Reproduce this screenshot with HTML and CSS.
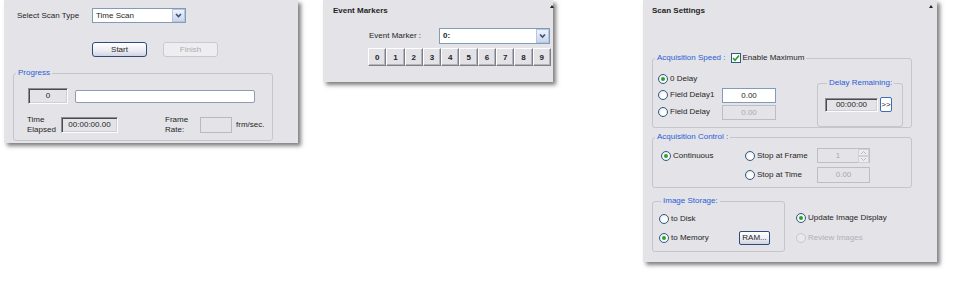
FILE: index.html
```html
<!DOCTYPE html>
<html lang="en">
<head>
    <meta charset="UTF-8">
    <title>Scan Control</title>
    <link rel="stylesheet" href="styles.css">
</head>
<body>
    <div class="desk">

        <!-- Scan type / progress -->
        <section class="panel panel-scan">
            <div class="row scan-type">
                <span class="lbl">Select Scan Type</span>
                <div class="combo scan-combo">
                    <span class="value">Time Scan</span>
                    <span class="drop"><svg width="11" height="11" viewBox="0 0 11 11"><path d="M3 4 L5.5 6.5 L8 4" fill="none" stroke="#3d4f73" stroke-width="1.6"/></svg></span>
                </div>
            </div>
            <div class="row actions">
                <button class="btn">Start</button>
                <button class="btn" disabled>Finish</button>
            </div>
            <fieldset class="group progress">
                <legend>Progress</legend>
                <div class="row r1">
                    <div class="sunken counter">0</div>
                    <div class="bar"></div>
                </div>
                <div class="row r2">
                    <span class="two-line te-label">Time<br>Elapsed</span>
                    <div class="sunken time">00:00:00.00</div>
                    <span class="two-line fr-label">Frame<br>Rate:</span>
                    <div class="rate"></div>
                    <span class="unit">frm/sec.</span>
                </div>
            </fieldset>
        </section>

        <!-- Event markers -->
        <section class="panel panel-events">
            <div class="title">Event Markers</div>
            <i class="collapse edge"></i>
            <div class="row marker-row">
                <span class="lbl">Event Marker :</span>
                <div class="combo marker-combo">
                    <span class="value strong">0:</span>
                    <span class="drop"><svg width="11" height="12" viewBox="0 0 11 12"><path d="M3 4.5 L5.5 7 L8 4.5" fill="none" stroke="#3d4f73" stroke-width="1.6"/></svg></span>
                </div>
            </div>
            <div class="digits">
                <button>0</button><button>1</button><button>2</button><button>3</button><button>4</button>
                <button>5</button><button>6</button><button>7</button><button>8</button><button>9</button>
            </div>
        </section>

        <!-- Scan settings -->
        <section class="panel panel-settings">
            <div class="title">Scan Settings</div>
            <i class="collapse"></i>

            <fieldset class="group speed">
                <legend>
                    <span class="blue">Acquisition Speed :</span>
                    <span class="check"><svg width="8" height="8" viewBox="0 0 8 8"><path d="M1 4 L3 6.2 L7 1.5" fill="none" stroke="#21a121" stroke-width="1.6"/></svg></span>
                    <span>Enable Maximum</span>
                </legend>
                <div class="speed-body">
                    <div class="speed-left">
                        <div class="opt"><span class="opt-label"><i class="radio on"></i>0 Delay</span></div>
                        <div class="opt"><span class="opt-label"><i class="radio"></i>Field Delay1</span><div class="field">0.00</div></div>
                        <div class="opt gap1"><span class="opt-label"><i class="radio"></i>Field Delay</span><div class="field off">0.00</div></div>
                    </div>
                    <fieldset class="group remain">
                        <legend>Delay Remaining:</legend>
                        <div class="row">
                            <div class="sunken clock">00:00:00</div>
                            <button class="more">&gt;&gt;</button>
                        </div>
                    </fieldset>
                </div>
            </fieldset>

            <fieldset class="group control">
                <legend>Acquisition Control :</legend>
                <div class="control-grid">
                    <div class="opt cont"><i class="radio on"></i>Continuous</div>
                    <div class="opt"><i class="radio"></i>Stop at Frame</div>
                    <div class="spin">
                        <span class="spin-val">1</span>
                        <span class="spin-btns">
                            <span><svg width="7" height="5" viewBox="0 0 7 5"><path d="M1 4 L3.5 1.5 L6 4" fill="none" stroke="#b8b8c0" stroke-width="1"/></svg></span>
                            <span><svg width="7" height="5" viewBox="0 0 7 5"><path d="M1 1 L3.5 3.5 L6 1" fill="none" stroke="#b8b8c0" stroke-width="1"/></svg></span>
                        </span>
                    </div>
                    <div></div>
                    <div class="opt"><i class="radio"></i>Stop at Time</div>
                    <div class="field off wide">0.00</div>
                </div>
            </fieldset>

            <div class="storage-row">
                <fieldset class="group storage">
                    <legend>Image Storage:</legend>
                    <div class="opt"><span class="st-label"><i class="radio"></i>to Disk</span></div>
                    <div class="opt gap3"><span class="st-label"><i class="radio on"></i>to Memory</span><button class="btn ram">RAM...</button></div>
                </fieldset>
                <div class="display-opts">
                    <div class="opt"><i class="radio on"></i>Update Image Display</div>
                    <div class="opt gap4 disabled"><i class="radio off"></i>Review Images</div>
                </div>
            </div>
        </section>

    </div>
</body>
</html>
```

FILE: styles.css
```css
* {
    box-sizing: border-box;
}
body {
    margin: 0;
    width: 953px;
    height: 281px;
    overflow: hidden;
    background: #fff;
    font: 8px/10px "Liberation Sans", Arial, sans-serif;
    color: #1f1f24;
}
.desk {
    display: flex;
    align-items: flex-start;
    padding-left: 4px;
}
.panel {
    position: relative;
    flex: none;
    background: #e3e3e8;
    box-shadow: 3px 3px 4px rgba(0, 0, 0, 0.5);
}
.panel-scan {
    width: 294px;
    height: 143px;
}
.panel-events {
    width: 230px;
    height: 82px;
    margin-left: 25px;
}
.panel-settings {
    width: 294px;
    height: 262px;
    margin-left: 90px;
}
.title {
    height: 16px;
    padding: 6px 0 0 10px;
    font-weight: bold;
}
.panel-settings .title {
    padding-left: 9px;
}
.collapse {
    position: absolute;
    top: 5px;
    right: 4px;
    width: 0;
    height: 0;
    border-left: 2.5px solid transparent;
    border-right: 2.5px solid transparent;
    border-bottom: 3px solid #222;
}
.collapse.edge {
    right: -1px;
}
.row {
    display: flex;
    align-items: center;
}

/* inputs */
.combo {
    display: flex;
    align-items: center;
    background: #fff;
    border: 1px solid #7f9db9;
}
.combo .value {
    flex: 1;
    padding-left: 3px;
}
.strong {
    font-weight: bold;
}
.drop {
    display: flex;
    align-items: center;
    justify-content: center;
    width: 13px;
    height: 100%;
    border: 1px solid #b7c5de;
    background: linear-gradient(#eef2fb, #c9d5ec);
}
.btn {
    height: 15px;
    padding: 0;
    font: inherit;
    color: #1f1f24;
    border: 1px solid #2f4a7c;
    border-radius: 3px;
    background: linear-gradient(#ffffff, #ebebf3 60%, #d3d3df);
}
.btn:disabled {
    color: #ababb2;
    border-color: #c9c9cf;
    background: #eeeef1;
}
.sunken {
    display: flex;
    align-items: center;
    justify-content: center;
    background: #e3e3e8;
    border: 1px solid;
    border-color: #8c8c92 #fdfdfd #fdfdfd #8c8c92;
    box-shadow: inset 1px 1px 0 #4a4a50, inset -1px -1px 0 #cfcfd5;
}
.field {
    width: 54px;
    height: 15px;
    line-height: 13px;
    text-align: center;
    background: #fff;
    border: 1px solid #7f9db9;
}
.field.off {
    color: #a9a9b0;
    background: #e3e3e8;
    border-color: #bdbdc5;
}

/* group boxes */
.group {
    margin: 0;
    padding: 0;
    min-width: 0;
    border: 1px solid #c5c5cc;
    border-radius: 3px;
}
.group legend {
    margin-left: 2px;
    padding: 0 2px;
    line-height: 10px;
    color: #2b5cd6;
}

/* scan panel */
.scan-type {
    margin-top: 8px;
    height: 15px;
}
.scan-type .lbl {
    width: 88px;
    padding-left: 13px;
}
.scan-combo {
    width: 94px;
    height: 15px;
}
.actions {
    margin-top: 19px;
    padding-left: 88px;
    gap: 16px;
}
.actions .btn {
    width: 55px;
}
.progress {
    width: 260px;
    margin: 11px 0 0 9px;
    padding: 10px 0 7px;
}
.progress .r1 {
    height: 16px;
}
.counter {
    width: 40px;
    height: 16px;
    margin-left: 14px;
}
.bar {
    width: 180px;
    height: 13px;
    margin-left: 7px;
    background: #fff;
    border: 1px solid #8e9bb2;
    border-radius: 2px;
}
.progress .r2 {
    height: 16px;
    margin-top: 13px;
}
.two-line {
    line-height: 10px;
}
.te-label {
    width: 34px;
    margin-left: 13px;
}
.time {
    width: 57px;
    height: 16px;
}
.fr-label {
    width: 35px;
    margin-left: 47px;
}
.rate {
    width: 32px;
    height: 16px;
    border: 1px solid #b9b9c0;
}
.unit {
    margin-left: 4px;
}

/* events panel */
.marker-row {
    height: 16px;
    margin-top: 12px;
}
.marker-row .lbl {
    width: 116px;
    padding-left: 46px;
}
.marker-combo {
    width: 111px;
    height: 16px;
}
.digits {
    display: grid;
    grid-template-columns: repeat(10, 1fr);
    width: 183px;
    height: 18px;
    margin: 4px 0 0 45px;
}
.digits button {
    padding: 0;
    font: bold 8px "Liberation Sans", Arial, sans-serif;
    color: #1f1f24;
    background: #e2e2e7;
    border: 1px solid;
    border-color: #fff #7e7e86 #7e7e86 #fff;
    box-shadow: inset -1px -1px 0 #b4b4bc;
}

/* settings panel */
.opt {
    display: flex;
    align-items: center;
    height: 16px;
}
.opt-label,
.st-label {
    display: flex;
    align-items: center;
    width: 64px;
}
.st-label {
    width: 80px;
}
.radio {
    position: relative;
    flex: none;
    width: 10px;
    height: 10px;
    margin-right: 2px;
    border: 1px solid #2f5a86;
    border-radius: 50%;
    background: radial-gradient(circle at 60% 60%, #fff 30%, #dcdce4);
}
.radio.on::after {
    content: "";
    position: absolute;
    left: 2px;
    top: 2px;
    width: 4px;
    height: 4px;
    border-radius: 50%;
    background: #27a327;
}
.radio.off {
    border-color: #c7c7ce;
    background: #e9e9ed;
}
.disabled {
    color: #b1b1b8;
}
.gap1 { margin-top: 1px; }
.gap3 { margin-top: 3px; }
.gap4 { margin-top: 4px; }

.speed {
    width: 260px;
    margin: 36px 0 0 9px;
}
.speed > legend {
    display: flex;
    align-items: center;
    line-height: 12px;
    color: #1f1f24;
}
.blue {
    color: #2b5cd6;
}
.check {
    display: flex;
    align-items: center;
    justify-content: center;
    width: 10px;
    height: 10px;
    margin: 0 2px 0 5px;
    background: #fff;
    border: 1px solid #2f5a86;
}
.speed-body {
    display: flex;
    height: 63px;
}
.speed-left {
    width: 164px;
    padding: 7px 0 0 5px;
}
.remain {
    width: 86px;
    height: 49px;
    margin-top: 14px;
    padding: 9px 0 0 7px;
}
.clock {
    width: 53px;
    height: 14px;
}
.more {
    width: 12px;
    height: 15px;
    margin-left: 2px;
    padding: 0;
    font: inherit;
    color: #1f1f24;
    background: #fff;
    border: 1px solid #3d6db5;
    border-radius: 2px;
}
.control {
    width: 260px;
    margin: 4px 0 0 9px;
    padding: 6px 0 4px;
}
.control-grid {
    display: grid;
    grid-template-columns: 92px 72px 53px;
    grid-template-rows: 16px 16px;
    row-gap: 3px;
}
.cont {
    padding-left: 8px;
}
.spin {
    display: flex;
    height: 15px;
    color: #a9a9b0;
    border: 1px solid #bdbdc5;
}
.spin-val {
    flex: 1;
    line-height: 13px;
    text-align: center;
}
.spin-btns {
    display: flex;
    flex-direction: column;
    width: 11px;
}
.spin-btns span {
    display: flex;
    flex: 1;
    align-items: center;
    justify-content: center;
    border: 1px solid #d0d0d6;
    background: #ececf0;
}
.field.wide {
    width: 53px;
    height: 16px;
    line-height: 14px;
}
.storage-row {
    display: flex;
    align-items: flex-start;
    margin: 8px 0 0 9px;
}
.storage {
    width: 133px;
    padding: 5px 0 5px 6px;
}
.ram {
    width: 31px;
    height: 14px;
    border-radius: 2px;
}
.display-opts {
    margin: 14px 0 0 11px;
}
```
